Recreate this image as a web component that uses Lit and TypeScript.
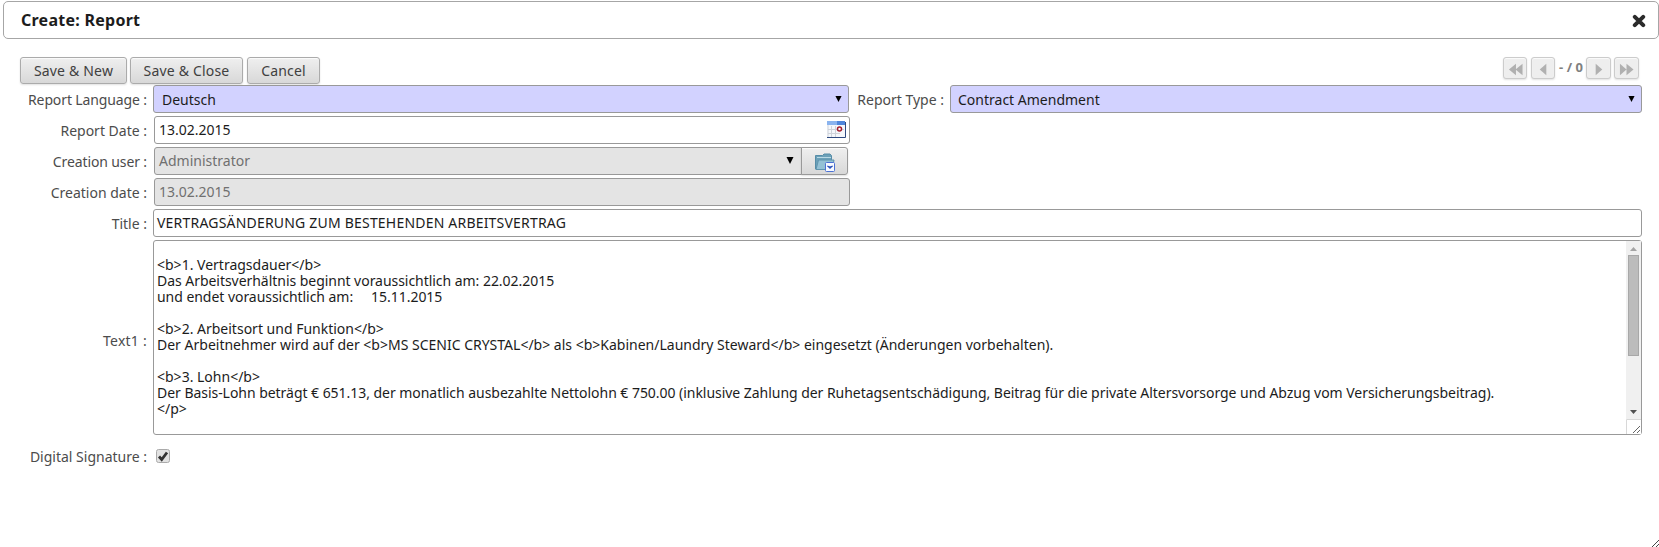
import { LitElement, html, css, svg } from "lit";
import { customElement } from "lit/decorators.js";

const first = svg`<path d="M8.500 1v14L1 8zM15.500 1v14L8 8z"/>`;
const prev = svg`<path d="M11 1v14L4 8z"/>`;
const next = svg`<path d="M5 1v14L12 8z"/>`;
const last = svg`<path d="M1 1v14L8 8zM8 1v14l7.500-7z"/>`;

@customElement("app-root")
export class AppRoot extends LitElement {
  static styles = css`
    :host {
      display: block;
      position: relative;
      box-sizing: border-box;
      height: 547px;
      overflow: hidden;
      padding: 1px 0 0 3px;
      background: #fff;
      color: #1c1c1c;
      font: 14px/16px "Noto Sans", sans-serif;
    }
    * { box-sizing: border-box; }
    svg { display: block; }
    .header {
      display: flex;
      align-items: center;
      justify-content: space-between;
      height: 38px;
      padding: 0 12px 0 17px;
      border: 1px solid #a6a6a6;
      border-radius: 5px;
    }
    .title {
      font-size: 16px;
      font-weight: bold;
      letter-spacing: 0.26px;
    }
    .close { margin-top: 2px; }
    .toolbar {
      display: flex;
      justify-content: space-between;
      margin: 18px 20px 0 17px;
      height: 28px;
    }
    .actions, .pager { display: flex; }
    .actions { gap: 3px; }
    button {
      font: inherit;
      padding: 0;
      border: 1px solid #ababab;
      border-radius: 3px;
      background: linear-gradient(#efefef, #d8d8d8);
      box-shadow: 0 1px 2px rgba(0, 0, 0, 0.12), inset 0 1px 1px rgba(255, 255, 255, 0.75);
      color: #404040;
    }
    .actions button { height: 27px; letter-spacing: 0.19px; }
    .save-new { width: 107px; }
    .save-close { width: 113px; }
    .cancel { width: 73px; margin-left: 1px; }
    .pager { gap: 4px; }
    .pager button {
      display: grid;
      place-items: center;
      width: 24px;
      height: 22px;
      background: #eeeeee;
      border-color: #cccccc;
      fill: #b0b0b0;
    }
    .pager .count + button { width: 25px; margin-right: -1px; }
    .pager button:last-child { width: 25px; }
    .pager svg { width: 15px; height: 13px; margin-top: 2px; }
    .count {
      width: 26px;
      margin: 2px -2px 0 -1px;
      text-align: center;
      white-space: nowrap;
      font-size: 13px;
      font-weight: bold;
      color: #808080;
    }
    .form { display: grid; gap: 3px; margin-right: 17px; }
    .row {
      display: grid;
      grid-template-columns: 144px 697px 88px 1fr;
      align-items: center;
      column-gap: 6px;
      min-height: 28px;
    }
    label {
      display: flex;
      justify-content: flex-end;
      padding-top: 2px;
      white-space: nowrap;
      color: #4c4c4c;
    }
    .tight { letter-spacing: -0.12px; }
    .loose { letter-spacing: 0.25px; }
    .field {
      display: flex;
      align-items: center;
      justify-content: space-between;
      height: 28px;
      margin-left: 1px;
      padding: 0 3px 1px 4px;
      border: 1px solid #999;
      border-radius: 3px;
      background: #fff;
      white-space: pre;
    }
    .select {
      background: #d2d2ff;
      margin: 0 1px 0 0;
      padding: 1px 6px 0 8px;
    }
    .type { margin-right: 0; padding-left: 7px; }
    .caret { width: 7px; height: 7px; margin-bottom: 2px; fill: #000; }
    .readonly { background: #e4e4e4; color: #707070; }
    .combo { display: flex; }
    .combo .field { width: 648px; border-radius: 3px 0 0 3px; padding-right: 7px; }
    .combo button {
      display: grid;
      place-items: center;
      width: 47px;
      height: 28px;
      margin-left: -1px;
      border-color: #999;
      border-radius: 0 3px 3px 0;
    }
    .combo svg.caret { width: 8px; height: 8px; }
    .folder { margin-top: 2px; }
    .wide { grid-column: 2 / -1; margin-left: 0; padding-left: 3px; }
    .heading { letter-spacing: 0.2px; }
    .area {
      height: 195px;
      padding: 0;
      align-items: stretch;
    }
    .area-label { padding-top: 6px; }
    .text { padding: 0 3px; overflow: hidden; }
    .even { letter-spacing: -0.04px; }
    .scroll {
      display: flex;
      flex-direction: column;
      align-items: center;
      width: 15px;
      background: #f0f0f0;
    }
    .up, .down { height: 14px; width: 15px; }
    .thumb { height: 101px; width: 11px; background: #bcbcbc; border: 1px solid #a8a8a8; }
    .down { margin-top: auto; }
    .corner { width: 15px; height: 15px; background: #fff; }
    .check { width: 14px; height: 14px; margin-left: 3px; }
    .signature { margin-top: 4px; }
    .grip { position: absolute; right: 0; bottom: 0; width: 7px; height: 7px; }
  `;

  private caret() {
    return html`<svg class="caret" viewBox="0 0 8 8"><path d="M.500 1h7L4 8z" /></svg>`;
  }

  private pageButton(shape: unknown) {
    return html`<button><svg viewBox="0 0 16 16" preserveAspectRatio="none">${shape}</svg></button>`;
  }

  render() {
    return html`
      <div class="header">
        <span class="title">Create: Report</span>
        <svg class="close" width="14" height="14" viewBox="0 0 14 14">
          <path d="M2.800 2.800l8.400 8.400M11.200 2.800l-8.400 8.400" stroke="#2b2b2b" stroke-width="4" stroke-linecap="round" />
        </svg>
      </div>

      <div class="toolbar">
        <div class="actions">
          <button class="save-new">Save &amp; New</button>
          <button class="save-close">Save &amp; Close</button>
          <button class="cancel">Cancel</button>
        </div>
        <div class="pager">
          ${this.pageButton(first)}${this.pageButton(prev)}
          <span class="count">- / 0</span>
          ${this.pageButton(next)}${this.pageButton(last)}
        </div>
      </div>

      <div class="form">
        <div class="row">
          <label class="tight">Report Language :</label>
          <div class="field select">Deutsch${this.caret()}</div>
          <label>Report Type :</label>
          <div class="field select type">Contract Amendment${this.caret()}</div>
        </div>

        <div class="row">
          <label>Report Date :</label>
          <div class="field"><span>13.02.2015</span><svg width="19" height="18" viewBox="0 0 19 18">
              <path d="M0 0h18v17H0z" fill="#f5f7fb" />
              <path d="M0 0h18v4H0z" fill="#4f86dc" />
              <path d="M0 0h10v4H0z" fill="#8ab3ee" />
              <path d="M1 4v13M4.500 5v11M8.500 5v11M1 8.500h16M1 12.500h12" stroke="#cfd3da" fill="none" />
              <path d="M0 16.500h18.500V1" stroke="#2f4a80" fill="none" />
              <circle cx="12.500" cy="8" r="2" fill="#fff" stroke="#a51d2d" stroke-width="1.500" />
            </svg></div>
        </div>

        <div class="row">
          <label class="tight">Creation user :</label>
          <div class="combo">
            <div class="field readonly">Administrator${this.caret()}</div>
            <button>
              <svg class="folder" width="20" height="19" viewBox="0 0 20 19">
                <path d="M.500 16V2.500h7L9 1h6l1.500 1.500V16z" fill="#6ba0b8" stroke="#568ca7" />
                <path d="M2 4.500h14" stroke="#b9d9e5" />
                <path d="M1 16.500L3.500 7h15.500l-2 9.500z" fill="#94c1d5" stroke="#6095ae" />
                <rect x="10.500" y="9.500" width="9" height="9" rx="1" fill="#f8faff" stroke="#4c72d4" />
                <path d="M12.500 13l2.500 2.500 2.500-2.500-2.500 1z" fill="#234cb8" stroke="#234cb8" />
              </svg>
            </button>
          </div>
        </div>

        <div class="row">
          <label>Creation date :</label>
          <div class="field readonly">13.02.2015</div>
        </div>

        <div class="row">
          <label>Title :</label>
          <div class="field wide heading">VERTRAGSÄNDERUNG ZUM BESTEHENDEN ARBEITSVERTRAG</div>
        </div>

        <div class="row">
          <label class="loose area-label">Text1 :</label>
          <div class="field wide area">
            <div class="text">
${"<b>1. Vertragsdauer</b>"}
<span class="even">Das Arbeitsverhältnis beginnt voraussichtlich am: 22.02.2015
und endet voraussichtlich am:     15.11.2015</span>

${"<b>2. Arbeitsort und Funktion</b>"}
${"Der Arbeitnehmer wird auf der <b>MS SCENIC CRYSTAL</b> als <b>Kabinen/Laundry Steward</b> eingesetzt (Änderungen vorbehalten)."}

${"<b>3. Lohn</b>"}
<span class="even">Der Basis-Lohn beträgt € 651.13, der monatlich ausbezahlte Nettolohn € 750.00 (inklusive Zahlung der Ruhetagsentschädigung, Beitrag für die private Altersvorsorge und Abzug vom Versicherungsbeitrag).</span>
${"</p>"}</div>
            <div class="scroll">
              <svg class="up" viewBox="0 0 15 14"><path d="M4 10l3.500-4L11 10z" fill="#a3a3a3" /></svg>
              <div class="thumb"></div>
              <svg class="down" viewBox="0 0 15 14"><path d="M4 5h7L7.500 9z" fill="#505050" /></svg>
              <svg class="corner" viewBox="0 0 15 15">
                <path d="M.500 15V.500H15" fill="none" stroke="#d8d8d8" />
                <path d="M7 14l7-7M11 14l3-3" stroke="#666" />
              </svg>
            </div>
          </div>
        </div>

        <div class="row signature">
          <label>Digital Signature :</label>
          <svg class="check" viewBox="0 0 14 14">
            <rect x=".5" y=".5" width="13" height="13" rx="2" fill="#e2e2e2" stroke="#aaa" />
            <path d="M3 7.500l2.700 3L11 3.500" fill="none" stroke="#333" stroke-width="2.800" />
          </svg>
        </div>
      </div>
      <svg class="grip" viewBox="0 0 7 7"><path d="M0 7l7-7M4 7l3-3" stroke="#444" /></svg>
    `;
  }
}
